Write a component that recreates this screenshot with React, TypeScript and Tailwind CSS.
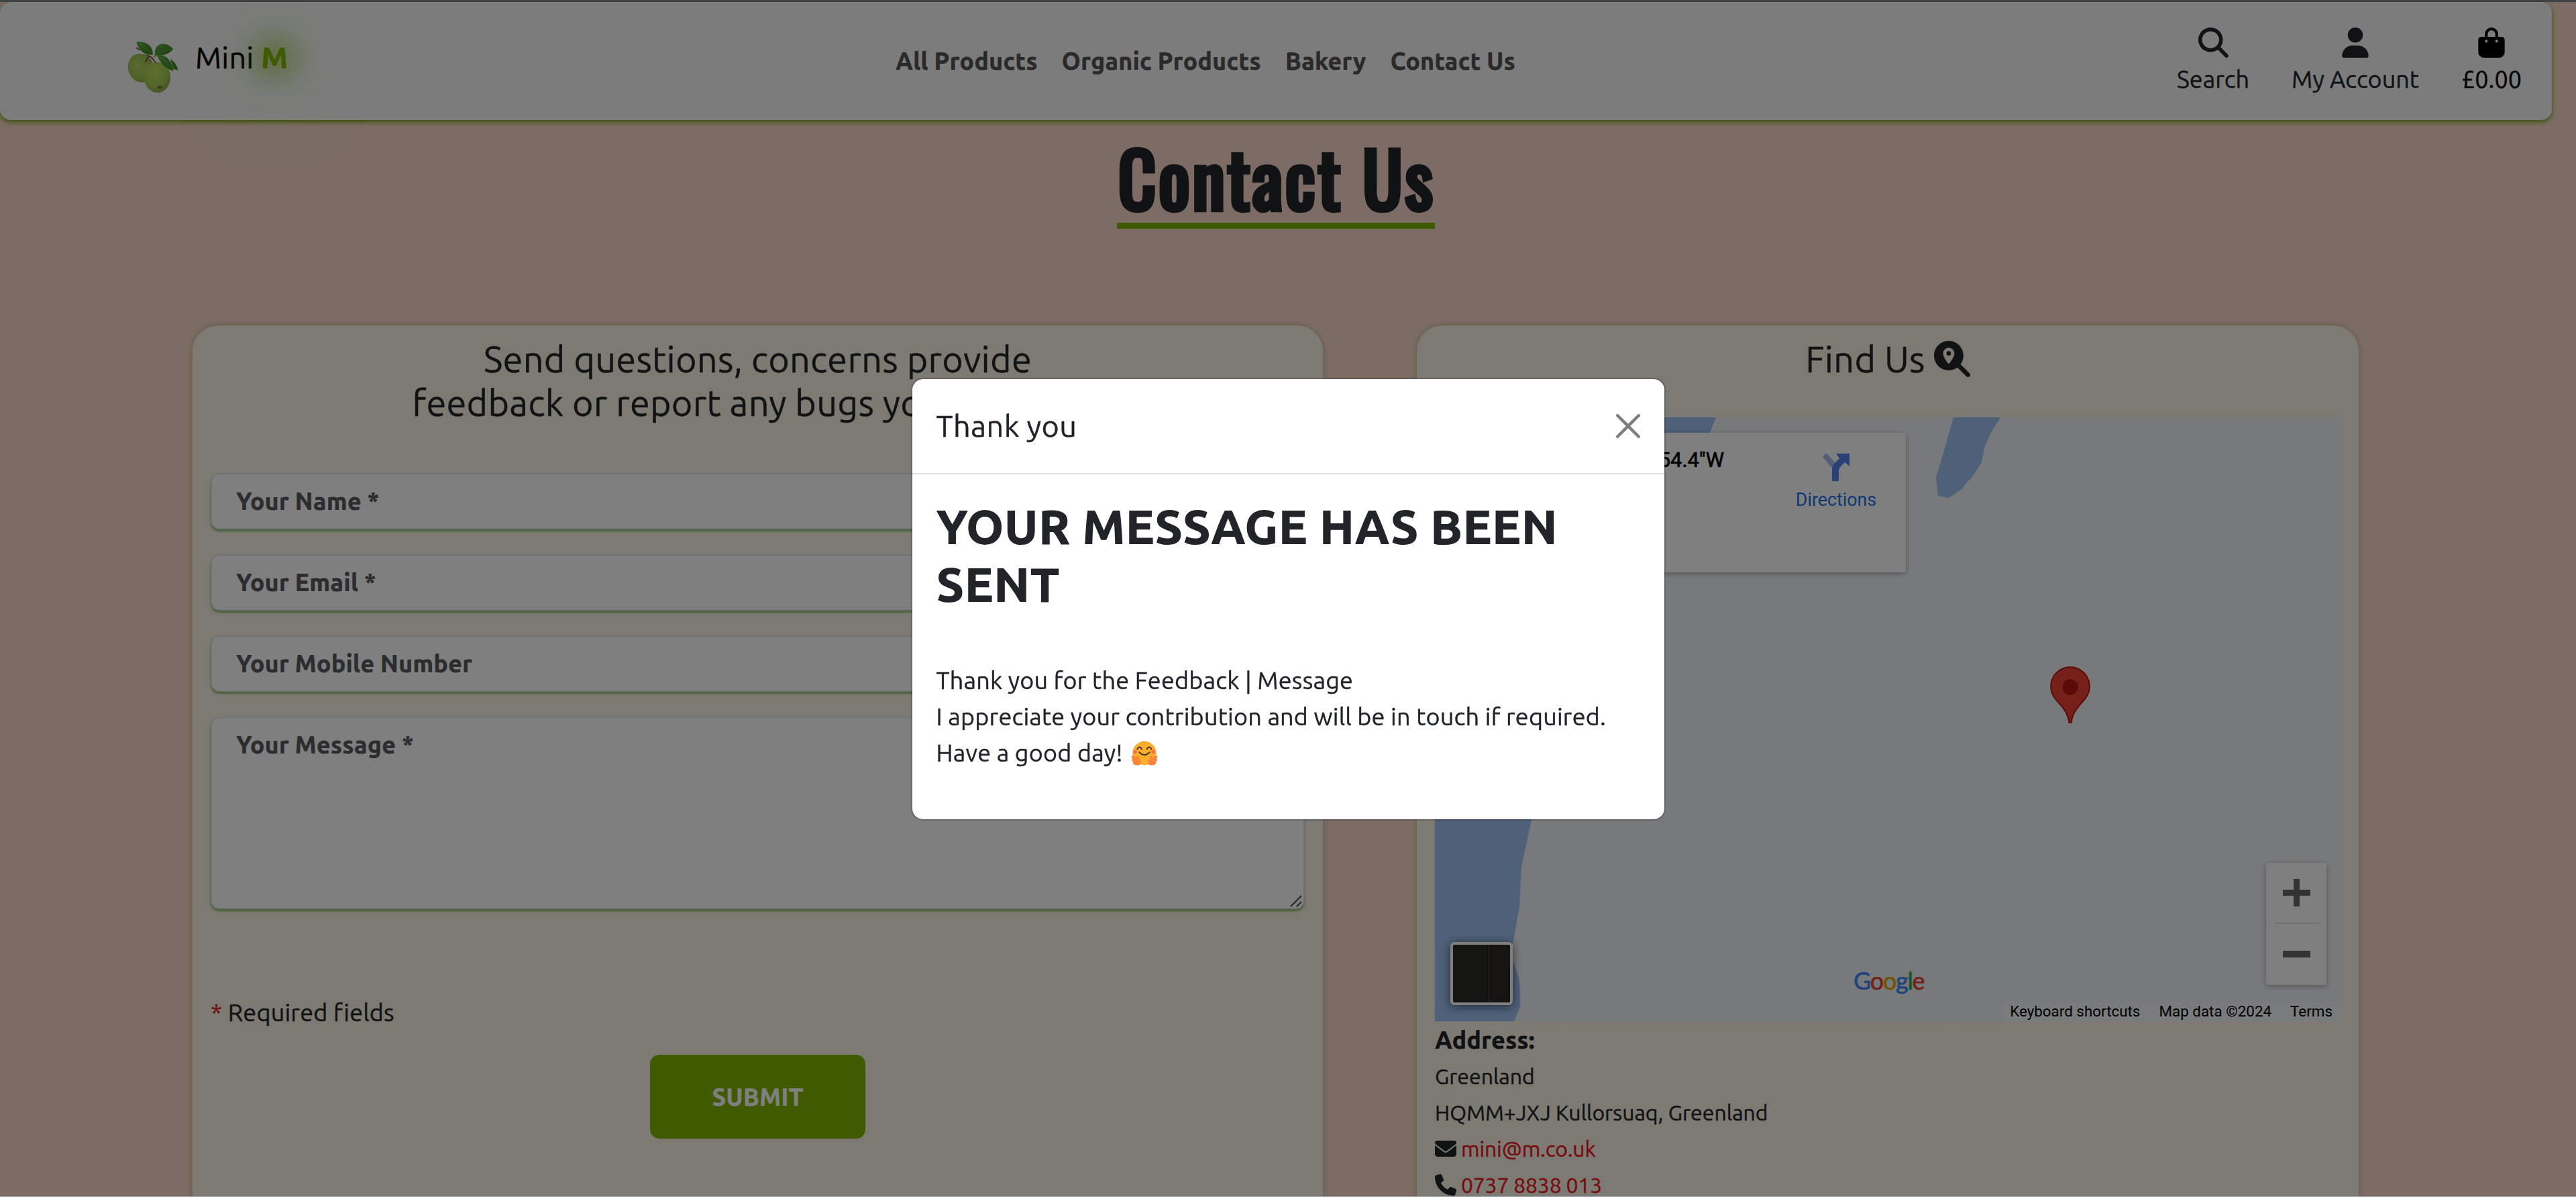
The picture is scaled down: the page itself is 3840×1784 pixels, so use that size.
import { FaBagShopping, FaEnvelope, FaMagnifyingGlass, FaMagnifyingGlassLocation, FaPhone, FaUser } from "react-icons/fa6";

function AppleLogo() {
  return (
    <svg viewBox="0 0 300 300" className="h-[100px] w-[100px]" aria-hidden="true">
      <defs>
        <radialGradient id="back" cx="0.4" cy="0.45" r="0.65">
          <stop offset="0" stopColor="#b4d664" />
          <stop offset="0.7" stopColor="#9cc24c" />
          <stop offset="1" stopColor="#7a9e38" />
        </radialGradient>
        <radialGradient id="front" cx="0.42" cy="0.35" r="0.7">
          <stop offset="0" stopColor="#bcdc62" />
          <stop offset="0.65" stopColor="#a6ca50" />
          <stop offset="1" stopColor="#80a63a" />
        </radialGradient>
        <linearGradient id="leaf" x1="0" y1="0" x2="1" y2="1">
          <stop offset="0" stopColor="#64ac44" />
          <stop offset="1" stopColor="#367a20" />
        </linearGradient>
      </defs>
      <path d="M32 148c0-32 22-58 54-58 36 0 59 26 59 62 0 40-22 66-52 66-36 0-61-34-61-70z" fill="url(#back)" />
      <path d="M102 190c0-36 26-62 58-62 36 0 62 28 62 66 0 40-26 70-58 70-36 0-62-36-62-74z" fill="url(#front)" />
      <path d="M163 238c8-6 18-6 24 0-4 6-8 10-14 10-5 0-8-4-10-10z" fill="#76703a" />
      <path d="M70 64l14 9M118 97l20 10 17 22M110 126l14-20" fill="none" stroke="#6b4438" strokeWidth="5" strokeLinecap="round" />
      <path d="M150 108l2-14M146 104l14-4" fill="none" stroke="#8ab060" strokeWidth="3" />
      <path d="M70 38c30-6 76 8 73 57-34 4-64-18-73-57z" fill="url(#leaf)" />
      <path d="M236 71c-14-18-40-32-62-22-20 9-24 30-20 49 34 2 62-4 78-27z" fill="url(#leaf)" />
      <path d="M221 114c18 10 30 26 35 50l-20-6z" fill="#3f8828" />
      <path d="M162 98c34-8 64 14 74 70-36-12-60-36-74-70z" fill="url(#leaf)" />
      <path d="M74 40q40 20 67 53M156 96q34-22 76-26M165 100q44 20 68 64" fill="none" stroke="#8fd468" strokeWidth="1.5" />
    </svg>
  );
}

function HugEmoji() {
  return (
    <svg viewBox="0 0 116 112" className="ml-[13px] h-[37px] w-[38px]" role="img" aria-label="hugging face">
      <circle cx="58" cy="56" r="54" fill="#fbae2c" />
      <circle cx="15" cy="50" r="9" fill="#fb7248" />
      <circle cx="98" cy="50" r="9" fill="#fb7248" />
      <path d="M25 38q10-20 21 0M69 38q10-20 21 0" fill="none" stroke="#402c34" strokeWidth="5.5" strokeLinecap="round" />
      <path d="M34 52q24 24 48 0" fill="none" stroke="#402c34" strokeWidth="5.5" strokeLinecap="round" />
      <path d="M2 68c6-3 10 2 16 6 4 2 5-6 10-6 6 1 4 8 6 14 4 4 10 12 8 20-2 9-12 10-22 9C8 110 2 100 6 92-2 90-2 86 4 82c-6-4-6-10-2-14z" fill="#fb8436" />
      <path d="M114 68c-6-3-10 2-16 6-4 2-5-6-10-6-6 1-4 8-6 14-4 4-10 12-8 20 2 9 12 10 22 9 12-1 18-11 14-19 8-2 8-6 2-10 6-4 6-10 2-14z" fill="#fb8436" />
    </svg>
  );
}

function MapPin() {
  return (
    <svg viewBox="0 0 60 85" className="absolute left-[917px] top-[371px] h-[85px] w-[60px]" aria-hidden="true">
      <path d="M30 1.2C14 1.2 1.2 14 1.2 30.5 1.2 52 25 57 28.5 84h3C35 57 58.800 52 58.800 30.500 58.800 14 46 1.200 30 1.200z" fill="#ea4335" stroke="#b31412" strokeWidth="2" />
      <circle cx="30" cy="31" r="11.7" fill="#b31412" />
    </svg>
  );
}

function MapPanel() {
  return (
    <div className="relative h-[900px] overflow-hidden bg-[#eff3f7] font-[Roboto,sans-serif] tracking-normal [-webkit-text-stroke:0]">
      <svg viewBox="0 0 1350 900" className="block h-[900px] w-[1350px]" aria-hidden="true">
        <path d="M0 0H419L410 23 300 300 144 600 129 669 126 729 116 785 116 809 125 835 127 854 127 879 118 900H0z" fill="#9ec0f3" />
        <path d="M773 0H843L828 24 819 46 815 67 803 86 784 108 766 120 750 117 747 89 754 67z" fill="#9ec0f3" />
        <path d="M193.500 0V900M770.500 130V900" stroke="#ebeff2" strokeWidth="1" />
      </svg>

      <div className="absolute left-[23px] top-[23px] flex h-[208px] w-[679px] rounded-[4px] bg-white shadow-[0_2px_8px_rgba(0,0,0,0.3)]">
        <p className="w-[408px] pt-[21px] text-right text-[30.800px] leading-[40px] text-black [-webkit-text-stroke:0.6px]">57°06'54.4"W</p>
        <div className="ml-[97px] flex w-[140px] flex-col items-center pt-[30px]">
          <svg viewBox="0 0 42 42" className="h-[42px] w-[42px]" aria-hidden="true">
            <path d="M1 6L6 0 21 16 16 24z" fill="#a4bdf0" />
            <path d="M15 42V26C15 18 19 15 26 8L21 1H41V20L34 14C28 20 25 22 25 28V42z" fill="#5583ec" />
          </svg>
          <span className="mt-[12px] text-[26.800px] leading-[32px] text-[#1a73e8]">Directions</span>
        </div>
      </div>

      <MapPin />

      <div className="absolute left-[23px] top-[782px] h-[94px] w-[93px] rounded-[6px] border-4 border-white bg-[linear-gradient(90deg,#2b2a28_0_62%,#4a4947_62%_64%,#2a2826_64%)] shadow-[0_2px_14px_rgba(0,0,0,0.6)]" />

      <div className="absolute left-[624px] top-[817px] text-[36px] leading-[44px] tracking-[-1.3px] font-[Lato,sans-serif] [-webkit-text-stroke:0.7px]">
        <span className="text-[#4285f4]">G</span>
        <span className="text-[#ea4335]">o</span>
        <span className="text-[#e0a800]">o</span>
        <span className="text-[#4285f4]">g</span>
        <span className="text-[#34a853]">l</span>
        <span className="text-[#ea4335]">e</span>
      </div>

      <div className="absolute left-[1239px] top-[664px] flex h-[182px] w-[90px] flex-col items-center rounded-[4px] bg-white shadow-[0_2px_8px_rgba(0,0,0,0.3)]">
        <div className="flex h-[90px] items-center">
          <svg viewBox="0 0 41 41" className="h-[41px] w-[41px]" aria-hidden="true">
            <path d="M0 16H16V0H25V16H41V25H25V41H16V25H0z" fill="#666" />
          </svg>
        </div>
        <div className="h-[2px] w-[67px] bg-[#e6e6e6]" />
        <div className="flex h-[92px] items-center">
          <div className="h-[10px] w-[41px] bg-[#666]" />
        </div>
      </div>

      <div className="absolute bottom-0 right-0 flex h-[30px] items-center bg-[#f4f6f8] pl-3 pr-[12px] text-[22.400px] leading-[30px] text-black">
        <span>Keyboard shortcuts</span>
        <span className="ml-[28px]">Map data ©2024</span>
        <span className="ml-[28px]">Terms</span>
      </div>
    </div>
  );
}

const navLinks = ["All Products", "Organic Products", "Bakery", "Contact Us"];
const fields = ["Your Name *", "Your Email *", "Your Mobile Number"];

function Header() {
  return (
    <header className="relative flex h-[176px] w-[3804px] rounded-[16px] bg-[#f9f9f9] shadow-[0_3px_7px_#6fa000]">
      <div className="flex w-[1335px] pl-[180px] pt-[47px]">
        <AppleLogo />
        <div className="ml-[11px] mt-[2px] text-[45px] leading-[67.500px] text-black">
          Mini{" "}
          <span className="font-extrabold text-[#7eb400] [-webkit-text-stroke:0] [text-shadow:0_0_40px_#7eb400,0_0_50px_#7eb400,0_0_80px_#7eb400,0_0_160px_#7eb400]">M</span>
        </div>
      </div>
      <nav className="flex items-center gap-9 text-[36px] font-extrabold leading-[54px] tracking-normal text-[#555] [-webkit-text-stroke:0]">
        {navLinks.map((l) => (
          <a key={l}>{l}</a>
        ))}
      </nav>
      <div className="ml-auto flex gap-[63px] pr-[45px] pt-[38px] text-[36px] leading-[54px] tracking-normal text-[#212529]">
        <div className="flex flex-col items-center">
          <FaMagnifyingGlass className="mb-[5px] h-[45px] w-[45px]" />
          Search
        </div>
        <div className="flex flex-col items-center">
          <FaUser className="mb-[5px] h-[45px] w-[40px]" />
          My Account
        </div>
        <div className="flex flex-col items-center text-black">
          <FaBagShopping className="mb-[5px] h-[45px] w-[40px]" />
          £0.00
        </div>
      </div>
    </header>
  );
}

const inputClass =
  "block w-full rounded-[13px] border-2 border-[#dee2e6] bg-white px-[36px] text-[36px] font-extrabold leading-[54px] tracking-normal text-[#212529] shadow-[0_3px_3px_#8fbf6c] outline-none [-webkit-text-stroke:0] placeholder:text-[#585b5e] placeholder:opacity-100";

function ContactCard() {
  return (
    <section className="h-[1400px] w-[1685px] rounded-[38px] bg-[#f8f4e6] px-[27px] pt-[18px] shadow-[0_0_9px_rgba(110,130,50,0.4)]">
      <h2 className="text-center text-[54px] leading-[64.800px] tracking-[0.28px]">
        Send questions, concerns provide
        <br />
        feedback or report any bugs you may find.
      </h2>
      <form className="pt-[72px]">
        <div className="flex flex-col gap-[37px]">
          {fields.map((f) => (
            <input key={f} placeholder={f} className={`${inputClass} h-[84px]`} />
          ))}
          <div className="relative">
            <textarea placeholder="Your Message *" className={`${inputClass} h-[287px] resize-none py-[13px]`} />
            <svg viewBox="0 0 18 18" className="absolute bottom-[3px] right-[4px] h-[18px] w-[18px]" aria-hidden="true">
              <path d="M1 17L17 1M10 17L17 10" stroke="#4c4c4c" strokeWidth="2.200" />
            </svg>
          </div>
        </div>
        <p className="mt-[127px] text-[36px] leading-[54px]">
          <span className="text-[#dc2530]">*</span> Required fields
        </p>
        <button
          type="button"
          className="mx-auto mt-[36px] block h-[125px] w-[321px] rounded-[14px] bg-[#7eb400] pt-px text-[36px] font-extrabold leading-[54px] tracking-normal text-white [-webkit-text-stroke:0]"
        >
          SUBMIT
        </button>
      </form>
    </section>
  );
}

function FindCard() {
  return (
    <section className="h-[1400px] w-[1404px] rounded-[38px] bg-[#f8f4e6] px-[27px] pt-[18px] shadow-[0_0_9px_rgba(110,130,50,0.4)]">
      <h2 className="mb-[54px] flex items-center justify-center gap-[13px] text-[54px] leading-[64.800px] tracking-[0.3px]">
        Find Us
        <FaMagnifyingGlassLocation />
      </h2>
      <MapPanel />
      <address className="pt-px text-[32px] not-italic leading-[54px] tracking-normal">
        <p className="text-[36px] font-extrabold [-webkit-text-stroke:0]">Address:</p>
        <p>Greenland</p>
        <p>HQMM+JXJ Kullorsuaq, Greenland</p>
        <p className="flex items-center gap-[7px]">
          <FaEnvelope />
          <a className="tracking-[-0.2px] text-[#ee1620]">mini@m.co.uk</a>
        </p>
        <p className="flex items-center gap-[7px]">
          <FaPhone />
          <a className="tracking-[-0.25px] text-[#ee1620]">0737 8838 013</a>
        </p>
      </address>
    </section>
  );
}

function ThankYouModal() {
  return (
    <div className="fixed inset-0 flex items-start justify-center bg-black/50 pt-[563px]">
      <div role="dialog" className="w-[1125px] rounded-[18px] border-2 border-black/[0.175] bg-white bg-clip-padding">
        <div className="flex items-center justify-between border-b-2 border-[#dee2e6] p-9">
          <h5 className="text-[45px] leading-[67.500px] tracking-[0.4px]">Thank you</h5>
          <svg viewBox="0 0 16 16" className="h-9 w-9 text-black opacity-50 [-webkit-text-stroke:0]" aria-label="Close">
            <path
              fill="currentColor"
              d="M.293.293a1 1 0 0 1 1.414 0L8 6.586 14.293.293a1 1 0 1 1 1.414 1.414L9.414 8l6.293 6.293a1 1 0 0 1-1.414 1.414L8 9.414l-6.293 6.293a1 1 0 0 1-1.414-1.414L6.586 8 .293 1.707a1 1 0 0 1 0-1.414z"
            />
          </svg>
        </div>
        <div className="px-9 pb-[72px] pt-[35px] text-[36px] leading-[54px]">
          <h1 className="mb-[73px] text-[72px] font-extrabold leading-[86.400px] tracking-normal [-webkit-text-stroke:0]">YOUR MESSAGE HAS BEEN SENT</h1>
          <p>Thank you for the Feedback | Message</p>
          <p>I appreciate your contribution and will be in touch if required.</p>
          <p className="flex items-center">
            Have a good day!
            <HugEmoji />
          </p>
        </div>
      </div>
    </div>
  );
}

export default function App() {
  return (
    <div className="relative h-[1784px] w-[3840px] overflow-hidden bg-[#f8d8ca] pt-[3px] tracking-[0.2px] text-[#212529] font-[Ubuntu,'Noto_Sans',sans-serif] [-webkit-text-stroke:0.4px]">
      <Header />
      <main className="w-[3804px]">
        <div className="flex justify-center pt-[13px]">
          <h1 className="border-b-[9px] border-[#7eb400] pl-[2px] pt-1 text-[110px] leading-[136px] tracking-[3.7px] font-[Oswald,'Open_Sans_Condensed',sans-serif] [-webkit-text-stroke:6.5px]">
            Contact Us
          </h1>
        </div>
        <div className="mt-[144px] flex gap-[140px] pl-[287px]">
          <ContactCard />
          <FindCard />
        </div>
      </main>
      <ThankYouModal />
      <div className="fixed inset-x-0 top-0 h-[3px] bg-[#404241]" />
      <div className="fixed inset-x-0 bottom-0 h-px bg-[#a4adb3]" />
    </div>
  );
}
